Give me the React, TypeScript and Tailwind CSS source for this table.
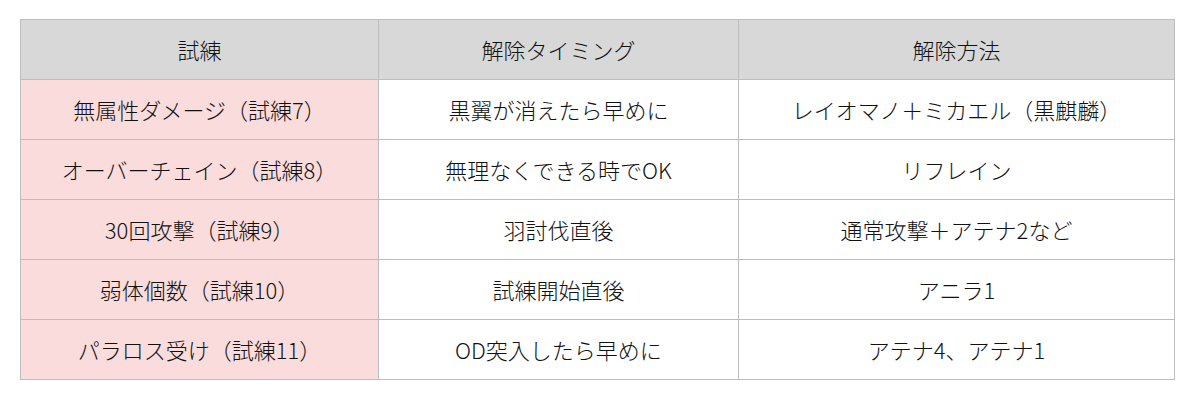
const rows = [
  ["無属性ダメージ（試練7）", "黒翼が消えたら早めに", "レイオマノ＋ミカエル（黒麒麟）"],
  ["オーバーチェイン（試練8）", "無理なくできる時でOK", "リフレイン"],
  ["30回攻撃（試練9）", "羽討伐直後", "通常攻撃＋アテナ2など"],
  ["弱体個数（試練10）", "試練開始直後", "アニラ1"],
  ["パラロス受け（試練11）", "OD突入したら早めに", "アテナ4、アテナ1"],
];

export default function App() {
  return (
    <div className="w-[1200px] h-[400px] bg-white pt-[19px] pl-[20px] font-['Noto_Sans_CJK_JP',sans-serif] text-[#111]">
      <table className="border-collapse table-fixed w-[1154px] text-[22px] font-light">
        <colgroup>
          <col className="w-[358px]" />
          <col className="w-[360px]" />
          <col className="w-[436px]" />
        </colgroup>
        <thead>
          <tr className="h-[60px] bg-[#d8d8d8]">
            <th className="border border-[#bdbdbd] font-light">試練</th>
            <th className="border border-[#bdbdbd] font-light">解除タイミング</th>
            <th className="border border-[#bdbdbd] font-light">解除方法</th>
          </tr>
        </thead>
        <tbody>
          {rows.map((r) => (
            <tr key={r[0]} className="h-[60px]">
              <td className="border border-[#bdbdbd] bg-[#f9dcdb] text-center">{r[0]}</td>
              <td className="border border-[#bdbdbd] text-center">{r[1]}</td>
              <td className="border border-[#bdbdbd] text-center">{r[2]}</td>
            </tr>
          ))}
        </tbody>
      </table>
    </div>
  );
}
